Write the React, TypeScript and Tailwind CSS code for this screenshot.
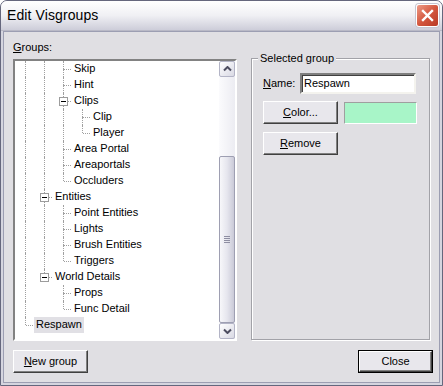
import React from 'react'

type Row = {
  label: string
  level: number
  rails: number[]
  last?: boolean
  box?: boolean
  selected?: boolean
}

const rows: Row[] = [
  { label: 'Skip', level: 2, rails: [0, 1] },
  { label: 'Hint', level: 2, rails: [0, 1] },
  { label: 'Clips', level: 2, rails: [0, 1], box: true },
  { label: 'Clip', level: 3, rails: [0, 1, 2] },
  { label: 'Player', level: 3, rails: [0, 1, 2], last: true },
  { label: 'Area Portal', level: 2, rails: [0, 1] },
  { label: 'Areaportals', level: 2, rails: [0, 1] },
  { label: 'Occluders', level: 2, rails: [0, 1], last: true },
  { label: 'Entities', level: 1, rails: [0], box: true },
  { label: 'Point Entities', level: 2, rails: [0, 1] },
  { label: 'Lights', level: 2, rails: [0, 1] },
  { label: 'Brush Entities', level: 2, rails: [0, 1] },
  { label: 'Triggers', level: 2, rails: [0, 1], last: true },
  { label: 'World Details', level: 1, rails: [0], box: true, last: true },
  { label: 'Props', level: 2, rails: [0] },
  { label: 'Func Detail', level: 2, rails: [0], last: true },
  { label: 'Respawn', level: 0, rails: [], last: true, selected: true },
]

const TreeRow: React.FC<{ row: Row }> = ({ row }) => (
  <div className="flex h-4 items-center">
    {Array.from({ length: row.level }).map((_, i) => (
      <div key={i} className="w-[19px] h-full shrink-0">
        {row.rails.includes(i) && (
          <div className="w-[11px] h-full border-r border-dotted border-[#a0a0a0]" />
        )}
      </div>
    ))}
    <div className="relative w-[19px] h-full shrink-0">
      <div className="absolute left-[10px] top-0 h-[8px] border-l border-dotted border-[#a0a0a0]" />
      {!row.last && (
        <div className="absolute left-[10px] top-[8px] h-[8px] border-l border-dotted border-[#a0a0a0]" />
      )}
      <div className="absolute left-[11px] top-[8px] w-[7px] border-t border-dotted border-[#a0a0a0]" />
      {row.box && (
        <div className="absolute left-[6px] top-[4px] size-[9px] border border-[#9c9c9c] bg-white flex items-center justify-center">
          <div className="w-[5px] h-px bg-black" />
        </div>
      )}
    </div>
    <span
      className={
        'px-[2px] h-[16px] leading-[14px] whitespace-nowrap ' +
        (row.selected ? 'bg-[#e1e0e5]' : '')
      }
    >
      {row.label}
    </span>
  </div>
)

const Chevron: React.FC<{ down?: boolean }> = ({ down }) => (
  <svg width="9" height="6" viewBox="0 0 9 6">
    <path
      d={down ? 'M1 1.5 L4.5 5 L8 1.5' : 'M1 4.5 L4.5 1 L8 4.5'}
      fill="none"
      stroke="#4d4d60"
      strokeWidth="2"
    />
  </svg>
)

const ScrollButton: React.FC<{ down?: boolean }> = ({ down }) => (
  <div className="h-[16px] shrink-0 rounded-[2px] border border-[#b3b4c6] bg-gradient-to-br from-white to-[#d9d9e4] flex items-center justify-center">
    <Chevron down={down} />
  </div>
)

const Button: React.FC<{ children: React.ReactNode; isDefault?: boolean }> = ({ children, isDefault }) => (
  <div className={isDefault ? 'border border-black' : ''}>
    <div
      className={
        'bg-[#e8e7ec] border border-t-white border-l-white border-b-[#404040] border-r-[#404040] shadow-[inset_-1px_-1px_0_#808080] flex items-center justify-center ' +
        (isDefault ? 'w-[73px] h-[21px]' : 'w-[75px] h-[23px]')
      }
    >
      {children}
    </div>
  </div>
)

export default function App() {
  return (
    <div className="w-[443px] h-[386px] font-['Liberation_Sans',Arial,sans-serif] text-[11px] text-black">
      <div className="w-full h-full flex flex-col border border-[#65677d] rounded-t-[7px] overflow-hidden bg-[#d5d5df]">
        <div className="h-[29px] shrink-0 bg-gradient-to-b from-white via-[#f0f0f4] to-[#cdcdd9] flex items-center pl-[6px] pr-[3px]">
          <span className="text-[14px] tracking-[0.1px] text-black">Edit Visgroups</span>
          <div className="ml-auto size-[23px] rounded-[3px] border border-white bg-gradient-to-br from-[#ec9a86] via-[#d4573f] to-[#b93a26] flex items-center justify-center shadow-[0_0_0_1px_#c6c6d2]">
            <svg width="13" height="13" viewBox="0 0 13 13">
              <path d="M2 2 L11 11 M11 2 L2 11" stroke="white" strokeWidth="2.4" strokeLinecap="square" />
            </svg>
          </div>
        </div>
        <div className="flex-1 px-[2px] pb-[2px] border-t border-[#b9b9c6]">
          <div className="h-full bg-[#e0dfe3] border border-[#9c9eb2] flex flex-col pt-[9px] pl-[9px] pr-[6px]">
            <div className="flex items-start">
              <div className="w-[224px] flex flex-col">
                <div className="h-[13px] leading-[13px]">
                  <span className="underline underline-offset-1">G</span>roups:
                </div>
                <div className="mt-[5px] h-[282px] flex border-2 border-t-[#828282] border-l-[#828282] border-b-white border-r-white shadow-[inset_1px_1px_0_#6f6f6f]">
                  <div className="flex-1 bg-white overflow-hidden">
                    {rows.map((r) => (
                      <TreeRow key={r.label} row={r} />
                    ))}
                  </div>
                  <div className="w-[16px] flex flex-col bg-gradient-to-r from-[#fbfbfd] to-[#ececf2]">
                    <ScrollButton />
                    <div className="h-[79px] shrink-0" />
                    <div className="flex-1 rounded-[2px] border border-[#9e9fb2] bg-gradient-to-r from-[#f7f7fa] via-[#e6e6ee] to-[#cacad8] flex flex-col items-center justify-center gap-[1px]">
                      <div className="w-[6px] h-px bg-[#8e8ea2]" />
                      <div className="w-[6px] h-px bg-[#8e8ea2]" />
                      <div className="w-[6px] h-px bg-[#8e8ea2]" />
                      <div className="w-[6px] h-px bg-[#8e8ea2]" />
                    </div>
                    <ScrollButton down />
                  </div>
                </div>
              </div>

              <div className="relative ml-[14px] mt-[17px] w-[179px] h-[282px] border border-[#a2a2a8] shadow-[inset_1px_1px_0_#fff,1px_1px_0_#fff] pt-[14px] pl-[11px]">
                <span className="absolute -top-[7px] left-[6px] px-[2px] bg-[#e0dfe3] leading-[13px]">
                  Selected group
                </span>
                <div className="flex items-center h-[21px]">
                  <span className="w-[37px]">
                    <span className="underline underline-offset-1">N</span>ame:
                  </span>
                  <div className="w-[116px] h-[21px] bg-white border-2 border-t-[#7f7f7f] border-l-[#7f7f7f] border-b-[#f4f3ee] border-r-[#f4f3ee] shadow-[inset_1px_1px_0_#404040] flex items-center pl-[2px]">
                    Respawn
                  </div>
                </div>
                <div className="flex items-center mt-[7px]">
                  <Button>
                    <span>
                      <span className="underline underline-offset-1">C</span>olor...
                    </span>
                  </Button>
                  <div className="ml-[6px] w-[73px] h-[22px] bg-[#a8f5c8] border border-t-[#9f9f9f] border-l-[#9f9f9f] border-b-white border-r-white" />
                </div>
                <div className="mt-[8px]">
                  <Button>
                    <span>
                      <span className="underline underline-offset-1">R</span>emove
                    </span>
                  </Button>
                </div>
              </div>
            </div>

            <div className="mt-[9px] flex justify-between items-start">
              <Button>
                <span>
                  <span className="underline underline-offset-1">N</span>ew group
                </span>
              </Button>
              <Button isDefault>Close</Button>
            </div>
          </div>
        </div>
      </div>
    </div>
  )
}
